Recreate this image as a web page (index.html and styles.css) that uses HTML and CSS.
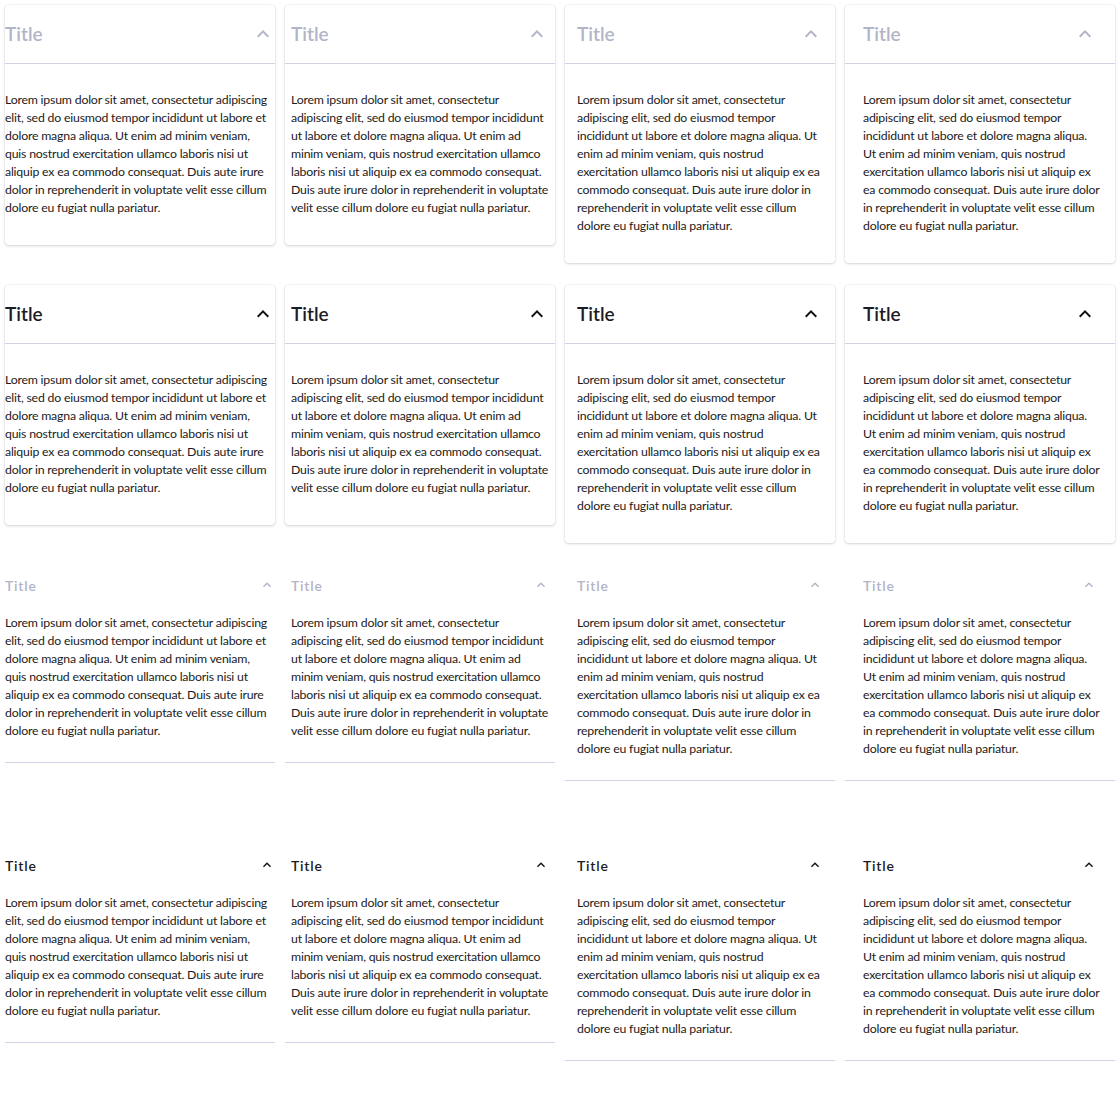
FILE: index.html
```html
<!DOCTYPE html>
<html>
<head>
<meta charset="utf-8">
<link rel="stylesheet" href="styles.css">
</head>
<body>
<div class="grid">
  <!-- Row 1: card, disabled -->
  <div class="cell"><div class="acc card disabled p0"><div class="head"><span class="title">Title</span><svg class="chev" viewBox="0 0 24 24"><path d="M12 8l-6 6 1.41 1.41L12 10.83l4.59 4.58L18 14z"/></svg></div><div class="body">Lorem ipsum dolor sit amet, consectetur adipiscing elit, sed do eiusmod tempor incididunt ut labore et dolore magna aliqua. Ut enim ad minim veniam, quis nostrud exercitation ullamco laboris nisi ut aliquip ex ea commodo consequat. Duis aute irure dolor in reprehenderit in voluptate velit esse cillum dolore eu fugiat nulla pariatur.</div></div></div>
  <div class="cell"><div class="acc card disabled p1"><div class="head"><span class="title">Title</span><svg class="chev" viewBox="0 0 24 24"><path d="M12 8l-6 6 1.41 1.41L12 10.83l4.59 4.58L18 14z"/></svg></div><div class="body">Lorem ipsum dolor sit amet, consectetur adipiscing elit, sed do eiusmod tempor incididunt ut labore et dolore magna aliqua. Ut enim ad minim veniam, quis nostrud exercitation ullamco laboris nisi ut aliquip ex ea commodo consequat. Duis aute irure dolor in reprehenderit in voluptate velit esse cillum dolore eu fugiat nulla pariatur.</div></div></div>
  <div class="cell"><div class="acc card disabled p2"><div class="head"><span class="title">Title</span><svg class="chev" viewBox="0 0 24 24"><path d="M12 8l-6 6 1.41 1.41L12 10.83l4.59 4.58L18 14z"/></svg></div><div class="body">Lorem ipsum dolor sit amet, consectetur adipiscing elit, sed do eiusmod tempor incididunt ut labore et dolore magna aliqua. Ut enim ad minim veniam, quis nostrud exercitation ullamco laboris nisi ut aliquip ex ea commodo consequat. Duis aute irure dolor in reprehenderit in voluptate velit esse cillum dolore eu fugiat nulla pariatur.</div></div></div>
  <div class="cell"><div class="acc card disabled p3"><div class="head"><span class="title">Title</span><svg class="chev" viewBox="0 0 24 24"><path d="M12 8l-6 6 1.41 1.41L12 10.83l4.59 4.58L18 14z"/></svg></div><div class="body">Lorem ipsum dolor sit amet, consectetur adipiscing elit, sed do eiusmod tempor incididunt ut labore et dolore magna aliqua. Ut enim ad minim veniam, quis nostrud exercitation ullamco laboris nisi ut aliquip ex ea commodo consequat. Duis aute irure dolor in reprehenderit in voluptate velit esse cillum dolore eu fugiat nulla pariatur.</div></div></div>

  <!-- Row 2: card, enabled -->
  <div class="cell"><div class="acc card p0"><div class="head"><span class="title">Title</span><svg class="chev" viewBox="0 0 24 24"><path d="M12 8l-6 6 1.41 1.41L12 10.83l4.59 4.58L18 14z"/></svg></div><div class="body">Lorem ipsum dolor sit amet, consectetur adipiscing elit, sed do eiusmod tempor incididunt ut labore et dolore magna aliqua. Ut enim ad minim veniam, quis nostrud exercitation ullamco laboris nisi ut aliquip ex ea commodo consequat. Duis aute irure dolor in reprehenderit in voluptate velit esse cillum dolore eu fugiat nulla pariatur.</div></div></div>
  <div class="cell"><div class="acc card p1"><div class="head"><span class="title">Title</span><svg class="chev" viewBox="0 0 24 24"><path d="M12 8l-6 6 1.41 1.41L12 10.83l4.59 4.58L18 14z"/></svg></div><div class="body">Lorem ipsum dolor sit amet, consectetur adipiscing elit, sed do eiusmod tempor incididunt ut labore et dolore magna aliqua. Ut enim ad minim veniam, quis nostrud exercitation ullamco laboris nisi ut aliquip ex ea commodo consequat. Duis aute irure dolor in reprehenderit in voluptate velit esse cillum dolore eu fugiat nulla pariatur.</div></div></div>
  <div class="cell"><div class="acc card p2"><div class="head"><span class="title">Title</span><svg class="chev" viewBox="0 0 24 24"><path d="M12 8l-6 6 1.41 1.41L12 10.83l4.59 4.58L18 14z"/></svg></div><div class="body">Lorem ipsum dolor sit amet, consectetur adipiscing elit, sed do eiusmod tempor incididunt ut labore et dolore magna aliqua. Ut enim ad minim veniam, quis nostrud exercitation ullamco laboris nisi ut aliquip ex ea commodo consequat. Duis aute irure dolor in reprehenderit in voluptate velit esse cillum dolore eu fugiat nulla pariatur.</div></div></div>
  <div class="cell"><div class="acc card p3"><div class="head"><span class="title">Title</span><svg class="chev" viewBox="0 0 24 24"><path d="M12 8l-6 6 1.41 1.41L12 10.83l4.59 4.58L18 14z"/></svg></div><div class="body">Lorem ipsum dolor sit amet, consectetur adipiscing elit, sed do eiusmod tempor incididunt ut labore et dolore magna aliqua. Ut enim ad minim veniam, quis nostrud exercitation ullamco laboris nisi ut aliquip ex ea commodo consequat. Duis aute irure dolor in reprehenderit in voluptate velit esse cillum dolore eu fugiat nulla pariatur.</div></div></div>

  <!-- Row 3: flat, disabled -->
  <div class="cell"><div class="acc flat disabled p0"><div class="head"><span class="title">Title</span><svg class="chev" viewBox="0 0 24 24"><path d="M12 8l-6 6 1.41 1.41L12 10.83l4.59 4.58L18 14z"/></svg></div><div class="body">Lorem ipsum dolor sit amet, consectetur adipiscing elit, sed do eiusmod tempor incididunt ut labore et dolore magna aliqua. Ut enim ad minim veniam, quis nostrud exercitation ullamco laboris nisi ut aliquip ex ea commodo consequat. Duis aute irure dolor in reprehenderit in voluptate velit esse cillum dolore eu fugiat nulla pariatur.</div></div></div>
  <div class="cell"><div class="acc flat disabled p1"><div class="head"><span class="title">Title</span><svg class="chev" viewBox="0 0 24 24"><path d="M12 8l-6 6 1.41 1.41L12 10.83l4.59 4.58L18 14z"/></svg></div><div class="body">Lorem ipsum dolor sit amet, consectetur adipiscing elit, sed do eiusmod tempor incididunt ut labore et dolore magna aliqua. Ut enim ad minim veniam, quis nostrud exercitation ullamco laboris nisi ut aliquip ex ea commodo consequat. Duis aute irure dolor in reprehenderit in voluptate velit esse cillum dolore eu fugiat nulla pariatur.</div></div></div>
  <div class="cell"><div class="acc flat disabled p2"><div class="head"><span class="title">Title</span><svg class="chev" viewBox="0 0 24 24"><path d="M12 8l-6 6 1.41 1.41L12 10.83l4.59 4.58L18 14z"/></svg></div><div class="body">Lorem ipsum dolor sit amet, consectetur adipiscing elit, sed do eiusmod tempor incididunt ut labore et dolore magna aliqua. Ut enim ad minim veniam, quis nostrud exercitation ullamco laboris nisi ut aliquip ex ea commodo consequat. Duis aute irure dolor in reprehenderit in voluptate velit esse cillum dolore eu fugiat nulla pariatur.</div></div></div>
  <div class="cell"><div class="acc flat disabled p3"><div class="head"><span class="title">Title</span><svg class="chev" viewBox="0 0 24 24"><path d="M12 8l-6 6 1.41 1.41L12 10.83l4.59 4.58L18 14z"/></svg></div><div class="body">Lorem ipsum dolor sit amet, consectetur adipiscing elit, sed do eiusmod tempor incididunt ut labore et dolore magna aliqua. Ut enim ad minim veniam, quis nostrud exercitation ullamco laboris nisi ut aliquip ex ea commodo consequat. Duis aute irure dolor in reprehenderit in voluptate velit esse cillum dolore eu fugiat nulla pariatur.</div></div></div>

  <!-- Row 4: flat, enabled -->
  <div class="cell"><div class="acc flat p0"><div class="head"><span class="title">Title</span><svg class="chev" viewBox="0 0 24 24"><path d="M12 8l-6 6 1.41 1.41L12 10.83l4.59 4.58L18 14z"/></svg></div><div class="body">Lorem ipsum dolor sit amet, consectetur adipiscing elit, sed do eiusmod tempor incididunt ut labore et dolore magna aliqua. Ut enim ad minim veniam, quis nostrud exercitation ullamco laboris nisi ut aliquip ex ea commodo consequat. Duis aute irure dolor in reprehenderit in voluptate velit esse cillum dolore eu fugiat nulla pariatur.</div></div></div>
  <div class="cell"><div class="acc flat p1"><div class="head"><span class="title">Title</span><svg class="chev" viewBox="0 0 24 24"><path d="M12 8l-6 6 1.41 1.41L12 10.83l4.59 4.58L18 14z"/></svg></div><div class="body">Lorem ipsum dolor sit amet, consectetur adipiscing elit, sed do eiusmod tempor incididunt ut labore et dolore magna aliqua. Ut enim ad minim veniam, quis nostrud exercitation ullamco laboris nisi ut aliquip ex ea commodo consequat. Duis aute irure dolor in reprehenderit in voluptate velit esse cillum dolore eu fugiat nulla pariatur.</div></div></div>
  <div class="cell"><div class="acc flat p2"><div class="head"><span class="title">Title</span><svg class="chev" viewBox="0 0 24 24"><path d="M12 8l-6 6 1.41 1.41L12 10.83l4.59 4.58L18 14z"/></svg></div><div class="body">Lorem ipsum dolor sit amet, consectetur adipiscing elit, sed do eiusmod tempor incididunt ut labore et dolore magna aliqua. Ut enim ad minim veniam, quis nostrud exercitation ullamco laboris nisi ut aliquip ex ea commodo consequat. Duis aute irure dolor in reprehenderit in voluptate velit esse cillum dolore eu fugiat nulla pariatur.</div></div></div>
  <div class="cell"><div class="acc flat p3"><div class="head"><span class="title">Title</span><svg class="chev" viewBox="0 0 24 24"><path d="M12 8l-6 6 1.41 1.41L12 10.83l4.59 4.58L18 14z"/></svg></div><div class="body">Lorem ipsum dolor sit amet, consectetur adipiscing elit, sed do eiusmod tempor incididunt ut labore et dolore magna aliqua. Ut enim ad minim veniam, quis nostrud exercitation ullamco laboris nisi ut aliquip ex ea commodo consequat. Duis aute irure dolor in reprehenderit in voluptate velit esse cillum dolore eu fugiat nulla pariatur.</div></div></div>
</div>
</body>
</html>
```
FILE: styles.css
```css
html, body {
  margin: 0;
  padding: 0;
  background: #ffffff;
}
body {
  padding: 5px;
  font-family: Lato, "Noto Sans", sans-serif;
  color: #1b1b22;
}
.grid {
  display: grid;
  grid-template-columns: repeat(4, 270px);
  grid-auto-rows: 270px;
  gap: 10px;
}
.cell {
  display: flex;
  flex-direction: column;
  align-items: stretch;
}
.acc {
  background: #ffffff;
}
.card {
  border-radius: 4px;
  box-shadow: 0 0 2px rgba(0, 0, 0, 0.12), 0 1px 3px rgba(0, 0, 0, 0.14);
}
.head {
  display: flex;
  align-items: center;
  justify-content: space-between;
}
.card .head {
  box-sizing: border-box;
  height: 59px;
  padding-bottom: 1px;
  border-bottom: 1px solid #d2d3e2;
}
.card .title {
  font-size: 19px;
  font-weight: 600;
  color: #1c1c24;
}
.card .chev {
  width: 24px;
  height: 24px;
  fill: #111116;
}
.card .body {
  padding-top: 27px;
  padding-bottom: 28px;
}
.body {
  font-size: 12.3px;
  letter-spacing: -0.2px;
  line-height: 18px;
  color: #1b1b22;
}
.flat {
  border-bottom: 1px solid #d2d3e6;
}
.flat .head {
  height: 40px;
}
.flat .title {
  font-size: 14px;
  font-weight: 600;
  letter-spacing: 0.8px;
  color: #1c1c24;
}
.flat .chev {
  width: 16px;
  height: 16px;
  fill: #111116;
}
.flat .body {
  padding-top: 9px;
  padding-bottom: 22px;
}
.disabled .title {
  color: #b2b4c8;
}
.disabled .chev {
  fill: #b2b4c8;
}
.p0 .head { padding-left: 0; padding-right: 0; }
.p1 .head { padding-left: 6px; padding-right: 6px; }
.p2 .head { padding-left: 12px; padding-right: 12px; }
.p3 .head { padding-left: 18px; padding-right: 18px; }
.p0 .body { padding-left: 0; padding-right: 3px; }
.p1 .body { padding-left: 6px; padding-right: 6px; }
.p2 .body { padding-left: 12px; padding-right: 12px; }
.p3 .body { padding-left: 18px; padding-right: 15px; }
```
